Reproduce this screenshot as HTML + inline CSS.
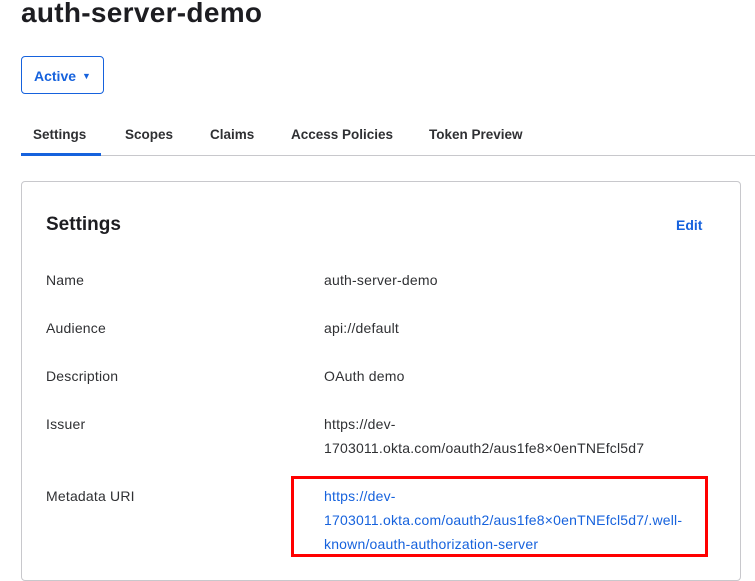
<!DOCTYPE html>
<html><head><meta charset="utf-8"><style>
*{margin:0;padding:0;box-sizing:border-box}
body{width:755px;height:560px;overflow:hidden;background:#fff;font-family:"Liberation Sans",sans-serif;color:#1d1d21;position:relative}
.a{position:absolute;white-space:nowrap}
h1{position:absolute;left:21px;top:-3px;font-size:28px;font-weight:bold;color:#1d1d21;letter-spacing:0.3px}
.btn{position:absolute;left:21px;top:56px;width:83px;height:38px;border:1px solid #1662dd;border-radius:4px;color:#1662dd;font-size:14px;font-weight:bold;padding:11px 0 0 12px}
.btn span{font-size:9px;margin-left:6px;position:relative;top:-2px}
.tab{position:absolute;top:127px;font-size:13.5px;font-weight:bold;color:#2f3033}
.line{position:absolute;left:21px;top:155px;width:734px;height:1px;background:#c8c8cc}
.ul{position:absolute;left:21px;top:153px;width:80px;height:3px;background:#1662dd}
.card{position:absolute;left:21px;top:181px;width:720px;height:400px;border:1px solid #c8c8cc;border-radius:4px}
.lab{position:absolute;left:46px;font-size:14px;color:#2f3033;letter-spacing:0.2px}
.val{position:absolute;left:324px;font-size:14px;color:#2f3033;line-height:24px;letter-spacing:0.2px}
.blue{color:#1662dd}
.red{position:absolute;left:291px;top:476px;width:417px;height:81px;border:3px solid #f00}
</style></head><body>
<h1>auth-server-demo</h1>
<div class="btn">Active<span>▼</span></div>
<div class="tab" style="left:33px">Settings</div>
<div class="tab" style="left:125px">Scopes</div>
<div class="tab" style="left:210px">Claims</div>
<div class="tab" style="left:291px">Access Policies</div>
<div class="tab" style="left:429px">Token Preview</div>
<div class="line"></div><div class="ul"></div>
<div class="card"></div>
<div class="a" style="left:46px;top:214px;font-size:19px;font-weight:bold;color:#1d1d21">Settings</div>
<div class="a blue" style="left:676px;top:217px;font-size:14px;font-weight:bold">Edit</div>
<div class="a lab" style="top:272px">Name</div>
<div class="a val" style="top:268px">auth-server-demo</div>
<div class="a lab" style="top:320px">Audience</div>
<div class="a val" style="top:316px">api://default</div>
<div class="a lab" style="top:368px">Description</div>
<div class="a val" style="top:364px">OAuth demo</div>
<div class="a lab" style="top:416px">Issuer</div>
<div class="a val" style="top:412px">https://dev-<br>1703011.okta.com/oauth2/aus1fe8×0enTNEfcl5d7</div>
<div class="a lab" style="top:488px">Metadata URI</div>
<div class="a val blue" style="top:484px">https://dev-<br>1703011.okta.com/oauth2/aus1fe8×0enTNEfcl5d7/.well-<br>known/oauth-authorization-server</div>
<div class="red"></div>
</body></html>
